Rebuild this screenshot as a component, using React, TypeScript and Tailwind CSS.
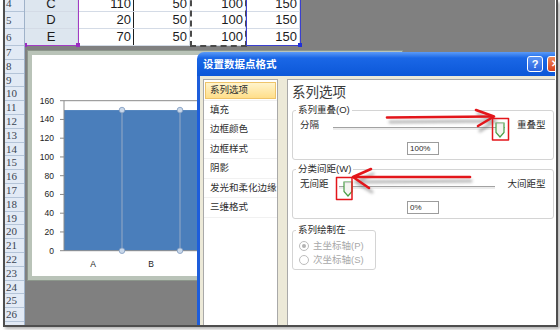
import React from "react";

type CellRow = {
  h: string;
  cut?: boolean;
  cat: string;
  vals: string[];
};

const cellRows: CellRow[] = [
  { h: "h-[12px]", cut: true, cat: "C", vals: ["110", "50", "100", "150"] },
  { h: "h-[17px]", cat: "D", vals: ["20", "50", "100", "150"] },
  { h: "h-[17px]", cat: "E", vals: ["70", "50", "100", "150"] },
];

const valueCols = [
  "w-[56px] border-r border-[#1e1e1e]",
  "w-[56px] border-r border-[#d4dbe6]",
  "w-[56px] border-r border-[#d4dbe6]",
  "w-[54px] border-r border-[#d4dbe6]",
];

const lowerRows = Array.from({ length: 20 }, (_, i) => i + 7);

const menu = ["系列选项", "填充", "边框颜色", "边框样式", "阴影", "发光和柔化边缘", "三维格式"];

function RowHeaders() {
  return (
    <div className="w-[20px] shrink-0 bg-[#e2eaf5] border-r border-[#9fb2c9] font-['Liberation_Serif',serif] text-[11px] text-[#3a4552]">
      <div className="h-[12px] overflow-hidden pl-[1px] border-b border-[#b4c4d8]">
        <div className="-mt-[3px] leading-[13px]">4</div>
      </div>
      <div className="h-[17px] leading-[16px] pl-[1px] border-b border-[#b4c4d8]">5</div>
      <div className="h-[17px] leading-[16px] pl-[1px] border-b border-[#b4c4d8]">6</div>
      {lowerRows.map((n) => (
        <div key={n} className="h-[13.8px] leading-[13px] pl-[1px] border-b border-[#b4c4d8]">
          {n}
        </div>
      ))}
      <div className="h-[3px]" />
    </div>
  );
}

function Cells() {
  return (
    <div className="w-[275px] bg-white text-[13px] text-[#1c1c1c]">
      {cellRows.map((r) => (
        <div key={r.cat} className={`${r.h} flex border-b border-[#d4dbe6]`}>
          <div className="w-[53px] bg-[#dde6ef] border-r border-[#d4dbe6] overflow-hidden text-center">
            <div className={r.cut ? "-mt-[4px] leading-[15px]" : "leading-[16px]"}>{r.cat}</div>
          </div>
          {r.vals.map((v, i) => (
            <div key={i} className={`${valueCols[i]} pr-[2px] overflow-hidden text-right`}>
              <div className={r.cut ? "-mt-[4px] leading-[15px]" : "leading-[16px]"}>{v}</div>
            </div>
          ))}
        </div>
      ))}
    </div>
  );
}

function RangeMarks() {
  return (
    <>
      <div className="absolute left-[-1px] top-[-10px] w-[55px] h-[56px] border border-[#a13cc4]" />
      <div className="absolute left-[-2px] top-[43px] w-[4px] h-[4px] bg-[#9a2cc0]" />
      <div className="absolute left-[51px] top-[43px] w-[4px] h-[4px] bg-[#9a2cc0]" />
      <div className="absolute left-[165px] top-[-10px] w-[57px] h-[57px] border-2 border-dashed border-[#4a4a4a]" />
      <div className="absolute left-[221px] top-[-10px] w-[55px] h-[56px] border border-[#3a3fcf]" />
      <div className="absolute left-[273px] top-[43px] w-[4px] h-[4px] bg-[#2130d8]" />
    </>
  );
}

function Chart() {
  const y = (v: number) => 195.7 - v * 0.9375;
  const ticks = [160, 140, 120, 100, 80, 60, 40, 20, 0];
  const dividers = [90, 148, 206, 264, 322];
  return (
    <div className="absolute left-[2px] top-[50px] w-[376px] h-[231px] border border-[#8c968b] bg-[#b9c3b8] p-[4px]">
      <div className="w-full h-full bg-white">
        <svg width="366" height="221" className="block">
          <rect x="32" y={y(150)} width="334" height={150 * 0.9375} fill="#4a7ebb" />
          <line x1="32" y1={y(160)} x2="366" y2={y(160)} stroke="#8a8a8a" strokeWidth="1" />
          <line x1="32" y1={y(160)} x2="32" y2={y(0)} stroke="#8a8a8a" strokeWidth="1" />
          <line x1="32" y1={y(0)} x2="366" y2={y(0)} stroke="#8a8a8a" strokeWidth="1" />
          {ticks.map((t) => (
            <g key={t}>
              <line x1="28" y1={y(t)} x2="32" y2={y(t)} stroke="#8a8a8a" strokeWidth="1" />
              <text
                x="22"
                y={y(t) + 3}
                textAnchor="end"
                fontSize="8.5"
                fill="#222"
                fontFamily="Liberation Sans, sans-serif"
              >
                {t}
              </text>
            </g>
          ))}
          {dividers.map((d) => (
            <g key={d}>
              <line x1={d} y1={y(150)} x2={d} y2={y(0)} stroke="#7e9cc2" strokeWidth="1.5" />
              <circle cx={d} cy={y(150)} r="2.8" fill="#c9d8ea" stroke="#7f9bbf" strokeWidth="0.8" />
              <circle cx={d} cy={y(0)} r="2.8" fill="#c9d8ea" stroke="#7f9bbf" strokeWidth="0.8" />
            </g>
          ))}
          {["A", "B"].map((c, i) => (
            <text
              key={c}
              x={61 + i * 58}
              y="212"
              textAnchor="middle"
              fontSize="8.5"
              fill="#222"
              fontFamily="Liberation Sans, sans-serif"
            >
              {c}
            </text>
          ))}
        </svg>
      </div>
    </div>
  );
}

function Thumb() {
  return (
    <svg width="10" height="16" viewBox="0 0 10 16" className="block">
      <path d="M1 1 H9 V10.5 L5 15 L1 10.5 Z" fill="#f4f4f0" stroke="#4a9e46" strokeWidth="1.2" />
      <path d="M1.6 1.6 H8.4" stroke="#c8c8c8" strokeWidth="1" />
    </svg>
  );
}

function Radio({ on, label }: { on?: boolean; label: string }) {
  return (
    <div className="h-[14px] flex items-center pl-[6px]">
      <div className="w-[10px] h-[10px] shrink-0 rounded-full border border-[#bcbcbc] bg-white flex items-center justify-center">
        {on && <div className="w-[4px] h-[4px] rounded-full bg-[#b3b3b3]" />}
      </div>
      <span className="ml-[4px] whitespace-nowrap text-[9.5px] leading-[12px] text-[#a9a9a9]">{label}</span>
    </div>
  );
}

function FormatDialog() {
  return (
    <div className="absolute left-[172px] top-[52px] w-[372px] h-[290px] flex flex-col">
      <div className="h-[24px] shrink-0 rounded-tl-[7px] rounded-tr-[7px] bg-[linear-gradient(to_bottom,#5b9bf8,#1a67e6_25%,#0c57d8)] flex items-center px-[6px]">
        <span className="text-white font-bold text-[10.5px] leading-[14px]">设置数据点格式</span>
        <div className="ml-auto flex gap-[4px]">
          <div className="w-[16px] h-[16px] rounded-[3px] border border-white bg-[linear-gradient(to_bottom,#5c95f4,#2a64e0)] flex items-center justify-center text-white font-bold text-[11px] leading-none">
            ?
          </div>
          <div className="w-[16px] h-[16px] rounded-[3px] border border-white bg-[linear-gradient(to_bottom,#f08a5c,#d8401c)] flex items-center justify-center text-white font-bold text-[10px] leading-none">
            ✕
          </div>
        </div>
      </div>
      <div className="flex-1 flex bg-[#ece9d8] border-l-[3px] border-[#1d5ddb] pl-[3px] pt-[3px]">
        <div className="w-[75px] shrink-0 bg-white border border-[#a9a9a9] pt-[1px]">
          {menu.map((m, i) => (
            <div key={m} className="h-[19.5px] border-b border-[#f1f1f1] py-[1px] px-[1px]">
              <div
                className={`h-full flex items-center pl-[4px] whitespace-nowrap text-[9.5px] text-[#2e2e2e] ${
                  i === 0 ? "bg-[linear-gradient(to_bottom,#fff4cc,#ffde8a)] border border-[#efc46a]" : "border border-transparent"
                }`}
              >
                {m}
              </div>
            </div>
          ))}
        </div>
        <div className="ml-[9px] w-[276px] shrink-0 bg-white border border-[#a9a9a9] pl-[4px] text-[#2c2c2c]">
          <div className="pt-[4px] text-[13.5px] leading-[18px] text-[#3a3a3a]">系列选项</div>

          <fieldset className="mt-[1px] w-[262px] border border-[#d4d4d4] rounded-[3px] pb-[4px]">
            <legend className="ml-[3px] px-[2px] text-[9.5px] leading-[14px]">系列重叠(O)</legend>
            <div className="h-[16px] flex items-center pl-[7px] text-[9.5px]">
              <span>分隔</span>
              <div className="relative ml-[14px] mt-[6px] w-[172px] h-[3px] border-t border-[#a2a2a2] bg-[#ececec]">
                <div className="absolute left-[162px] -top-[6px]">
                  <Thumb />
                </div>
              </div>
              <span className="ml-[12px]">重叠型</span>
            </div>
            <div className="mt-[9px] ml-[114px] w-[32px] h-[13px] border border-[#9c9c9c] pl-[2px] text-[8px] leading-[11px]">
              100%
            </div>
          </fieldset>

          <fieldset className="mt-[2px] w-[262px] border border-[#d4d4d4] rounded-[3px] pb-[4px]">
            <legend className="ml-[3px] px-[2px] text-[9.5px] leading-[14px]">分类间距(W)</legend>
            <div className="h-[16px] flex items-center pl-[7px] text-[9.5px]">
              <span>无间距</span>
              <div className="relative ml-[10px] mt-[6px] w-[156px] h-[3px] border-t border-[#a2a2a2] bg-[#ececec]">
                <div className="absolute left-[4px] -top-[6px]">
                  <Thumb />
                </div>
              </div>
              <span className="ml-[13px]">大间距型</span>
            </div>
            <div className="mt-[9px] ml-[114px] w-[32px] h-[13px] border border-[#9c9c9c] pl-[2px] text-[8px] leading-[11px]">
              0%
            </div>
          </fieldset>

          <fieldset className="mt-[4px] w-[84px] border border-[#d4d4d4] rounded-[3px] pt-[2px] pb-[2px]">
            <legend className="ml-[3px] px-[2px] text-[9.5px] leading-[14px]">系列绘制在</legend>
            <Radio on label="主坐标轴(P)" />
            <Radio label="次坐标轴(S)" />
          </fieldset>
        </div>
      </div>
    </div>
  );
}

function Annotations() {
  return (
    <svg
      className="absolute left-0 top-0 pointer-events-none"
      width="530"
      height="325"
      viewBox="25 0 530 325"
    >
      <defs>
        <filter id="soft" x="-10%" y="-50%" width="120%" height="200%">
          <feGaussianBlur stdDeviation="1.6" />
        </filter>
      </defs>
      <g filter="url(#soft)" opacity="0.5" stroke="#6a6a6a" strokeWidth="3" fill="none" strokeLinecap="round">
        <path d="M390 122 L492 121 M478 114 L495 121 L480 131" />
        <path d="M356 182 L471 181 M373 174 L356 182 L372 192" />
      </g>
      <g stroke="#e3161b" fill="none" strokeLinecap="round" strokeLinejoin="round">
        <path d="M387 117.5 L491 116.5" strokeWidth="2.6" />
        <path d="M476 110 L494 116.5 L478 126" strokeWidth="2.6" />
        <path d="M354 177 L470 177" strokeWidth="2.6" />
        <path d="M371 169 L353 177 L369 188" strokeWidth="2.6" />
        <rect x="492.5" y="118.5" width="16" height="21.5" strokeWidth="1.5" />
        <rect x="336.5" y="177.5" width="15.5" height="22" strokeWidth="1.5" />
      </g>
    </svg>
  );
}

export default function App() {
  return (
    <div className="w-[560px] h-[330px] bg-white overflow-hidden font-['Liberation_Sans','Noto_Sans_CJK_SC',sans-serif]">
      <div className="ml-[3px] w-[555px] h-[327px] flex border-l-2 border-r-2 border-b-2 border-[#4e4e4e] shadow-[2px_2px_3px_rgba(0,0,0,0.3)]">
        <RowHeaders />
        <div className="relative w-[530px] h-[325px] bg-[#808080] overflow-hidden">
          <Cells />
          <RangeMarks />
          <Chart />
          <FormatDialog />
          <Annotations />
        </div>
      </div>
    </div>
  );
}
